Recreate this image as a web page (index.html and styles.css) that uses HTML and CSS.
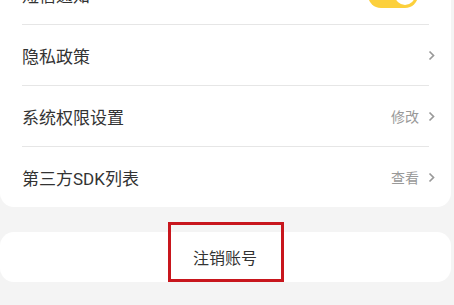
FILE: index.html
```html
<!DOCTYPE html>
<html>
<head>
  <title>设置</title>
  <link rel="stylesheet" href="styles.css">
</head>
<body>
  <div class="card settings">
    <div class="row">
      <span class="label">短信通知</span>
      <span class="switch on"><span class="knob"></span></span>
    </div>
    <div class="row">
      <span class="label">隐私政策</span>
      <span class="extra">
        <svg class="chev" width="7" height="11" viewBox="0 0 7 11"><path d="M1.5 1.5l4 4-4 4" fill="none" stroke="#999" stroke-width="1.7"/></svg>
      </span>
    </div>
    <div class="row">
      <span class="label">系统权限设置</span>
      <span class="extra">修改
        <svg class="chev" width="7" height="11" viewBox="0 0 7 11"><path d="M1.5 1.5l4 4-4 4" fill="none" stroke="#999" stroke-width="1.7"/></svg>
      </span>
    </div>
    <div class="row last">
      <span class="label">第三方SDK列表</span>
      <span class="extra">查看
        <svg class="chev" width="7" height="11" viewBox="0 0 7 11"><path d="M1.5 1.5l4 4-4 4" fill="none" stroke="#999" stroke-width="1.7"/></svg>
      </span>
    </div>
  </div>

  <div class="card logout">
    <span class="logout-text">注销账号</span>
    <div class="mark"></div>
  </div>
</body>
</html>
```

FILE: styles.css
```css
body {
  margin: 0;
  background-color: #f4f4f4;
  font-family: Roboto, "Noto Sans CJK SC", sans-serif;
  color: #333;
  overflow: hidden;
}

.card {
  background-color: #fff;
  border-radius: 14px;
  width: 451px;
}

.settings {
  margin-top: -36px;
}

.row {
  height: 60px;
  margin: 0 22px;
  border-bottom: 1px solid #e6e6e6;
  display: flex;
  align-items: center;
  justify-content: space-between;
  font-size: 17px;
}

.row.last {
  border-bottom: none;
}

.extra {
  display: flex;
  align-items: center;
  gap: 9px;
  font-size: 14px;
  color: #999;
}

.chev {
  display: block;
  margin-right: -6px;
}

.switch {
  width: 50px;
  height: 26px;
  border-radius: 13px;
  background-color: #fcd03c;
  display: flex;
  align-items: center;
  justify-content: flex-end;
  margin-right: 11px;
  margin-top: 2px;
}

.knob {
  width: 20px;
  height: 20px;
  border-radius: 50%;
  background-color: #fff;
  margin-right: 3px;
}

.logout {
  margin-top: 25px;
  height: 50px;
  display: flex;
  align-items: center;
  justify-content: center;
  position: relative;
  font-size: 16px;
}

.logout-text {
  margin-left: -1px;
}

.mark {
  position: absolute;
  left: 168px;
  top: -10px;
  width: 110px;
  height: 54px;
  border: 3px solid #c8161d;
}
```
